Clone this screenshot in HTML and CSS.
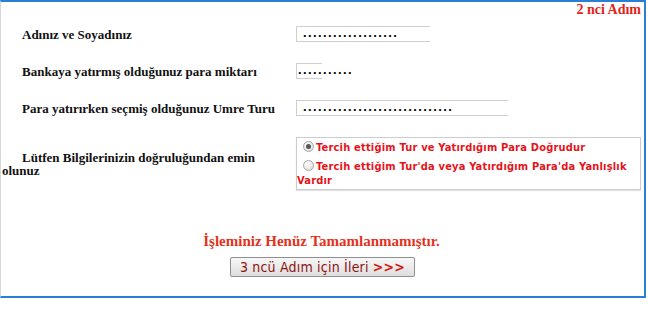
FILE: index.html
```html
<!DOCTYPE html>
<html lang="tr">
<head>
    <meta charset="UTF-8">
    <title>Umre Kayıt - 2 nci Adım</title>
    <link rel="stylesheet" href="styles.css">
</head>
<body>
    <div class="panel">
        <div class="step">2 nci Adım</div>
        <div class="form-grid">
            <div class="label">Adınız ve Soyadınız</div>
            <div class="field field-name">...................</div>

            <div class="label">Bankaya yatırmış olduğunuz para miktarı</div>
            <div class="field field-amount">...........</div>

            <div class="label">Para yatırırken seçmiş olduğunuz Umre Turu</div>
            <div class="field field-tour">..............................</div>

            <div class="label">Lütfen Bilgilerinizin doğruluğundan emin olunuz</div>
            <div class="choices">
                <div class="choice"><span class="radio checked"></span>Tercih ettiğim Tur ve Yatırdığım Para Doğrudur</div>
                <div class="choice"><span class="radio"></span>Tercih ettiğim Tur'da veya Yatırdığım Para'da Yanlışlık Vardır</div>
            </div>
        </div>
        <div class="message">İşleminiz Henüz Tamamlanmamıştır.</div>
        <div class="actions">
            <button type="button" class="next-button">3 ncü Adım için İleri <b>&gt;&gt;&gt;</b></button>
        </div>
    </div>
</body>
</html>
```

FILE: styles.css
```css
body {
    margin: 0;
    background-color: #ffffff;
    font-family: 'Liberation Serif', serif;
    color: #111111;
}
.panel {
    width: 646px;
    height: 298px;
    box-sizing: border-box;
    border: 2px solid #2a7fd5;
    border-left: 1px solid #d8d8d8;
    padding: 0 3px 0 1px;
}
.step {
    text-align: right;
    font-size: 14px;
    font-weight: bold;
    line-height: 16px;
    color: #e3241b;
}
.form-grid {
    display: grid;
    grid-template-columns: 280px 1fr;
    grid-template-rows: 16px 16px 16px auto;
    column-gap: 14px;
    row-gap: 21px;
    margin-top: 8px;
}
.label {
    align-self: center;
    font-size: 13px;
    font-weight: bold;
    line-height: 13px;
    text-indent: 20px;
}
.field {
    height: 16px;
    box-sizing: border-box;
    border: 1px solid #cfcfcf;
    border-right: none;
    padding-left: 6px;
    font-family: 'Liberation Sans', sans-serif;
    font-size: 13px;
    font-weight: bold;
    letter-spacing: 1.4px;
    line-height: 11px;
    color: #000000;
    white-space: nowrap;
    overflow: visible;
}
.field-name {
    width: 134px;
}
.field-amount {
    width: 26px;
    padding-left: 1px;
}
.field-tour {
    width: 212px;
}
.choices {
    border: 1px solid #cccccc;
    box-shadow: 0 1px 1px #e4e4e4;
    padding: 3px 2px 1px 0;
    font-family: 'DejaVu Sans Condensed', 'DejaVu Sans', sans-serif;
    font-size: 11px;
    font-weight: bold;
    letter-spacing: 0.2px;
    line-height: 14px;
    color: #e5141b;
}
.choice + .choice {
    margin-top: 5px;
}
.radio {
    display: inline-block;
    width: 9px;
    height: 9px;
    margin: 0 2px 0 6px;
    border: 1px solid #a9a9a9;
    border-radius: 50%;
    background: radial-gradient(circle at 40% 35%, #ffffff, #d6d6d6);
    vertical-align: -1px;
    position: relative;
}
.radio.checked::after {
    content: '';
    position: absolute;
    left: 2px;
    top: 2px;
    width: 5px;
    height: 5px;
    border-radius: 50%;
    background-color: #555555;
}
.message {
    margin-top: 43px;
    text-align: center;
    font-size: 15px;
    font-weight: bold;
    line-height: 16px;
    color: #e2321d;
}
.actions {
    display: flex;
    justify-content: center;
    margin-top: 8px;
}
.next-button {
    width: 185px;
    height: 20px;
    padding: 0;
    border: 1px solid #8f8f8f;
    border-radius: 2px;
    background: linear-gradient(#f7f7f7, #dedede);
    font-family: 'DejaVu Sans Condensed', 'DejaVu Sans', sans-serif;
    font-size: 14px;
    letter-spacing: 0.2px;
    line-height: 18px;
    color: #8e1410;
    margin-left: 2px;
}
.next-button b {
    color: #d8140e;
}
```
